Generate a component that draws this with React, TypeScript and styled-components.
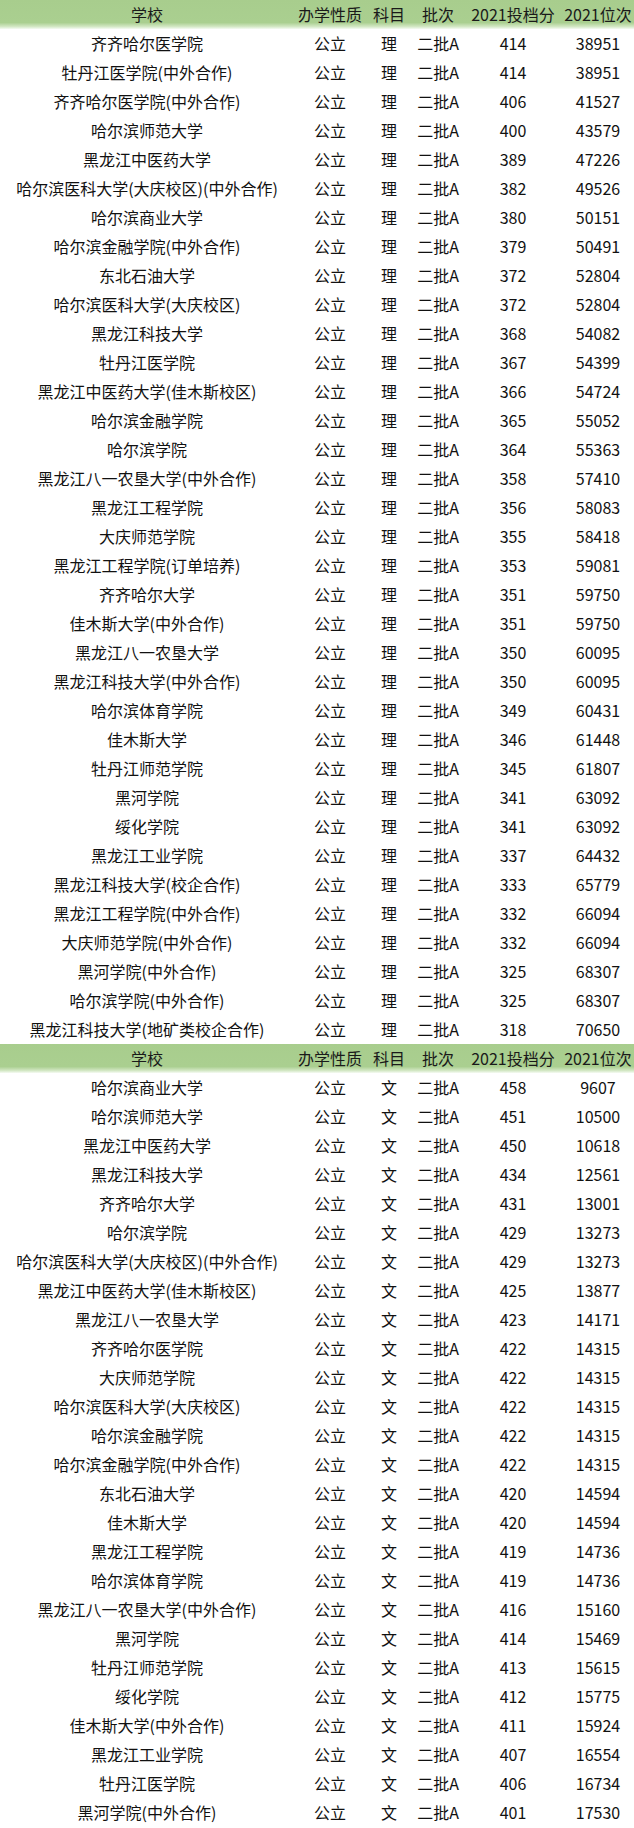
import React from "react";
import styled, { createGlobalStyle } from "styled-components";

const GlobalStyle = createGlobalStyle`
  html, body {
    margin: 0;
    padding: 0;
    background: #ffffff;
  }
  body {
    font-family: "Noto Sans CJK SC", "Noto Sans", sans-serif;
    color: #111111;
  }
`;

type Row = [string, number, number];

const sciRows: Row[] = [
  ["齐齐哈尔医学院", 414, 38951],
  ["牡丹江医学院(中外合作)", 414, 38951],
  ["齐齐哈尔医学院(中外合作)", 406, 41527],
  ["哈尔滨师范大学", 400, 43579],
  ["黑龙江中医药大学", 389, 47226],
  ["哈尔滨医科大学(大庆校区)(中外合作)", 382, 49526],
  ["哈尔滨商业大学", 380, 50151],
  ["哈尔滨金融学院(中外合作)", 379, 50491],
  ["东北石油大学", 372, 52804],
  ["哈尔滨医科大学(大庆校区)", 372, 52804],
  ["黑龙江科技大学", 368, 54082],
  ["牡丹江医学院", 367, 54399],
  ["黑龙江中医药大学(佳木斯校区)", 366, 54724],
  ["哈尔滨金融学院", 365, 55052],
  ["哈尔滨学院", 364, 55363],
  ["黑龙江八一农垦大学(中外合作)", 358, 57410],
  ["黑龙江工程学院", 356, 58083],
  ["大庆师范学院", 355, 58418],
  ["黑龙江工程学院(订单培养)", 353, 59081],
  ["齐齐哈尔大学", 351, 59750],
  ["佳木斯大学(中外合作)", 351, 59750],
  ["黑龙江八一农垦大学", 350, 60095],
  ["黑龙江科技大学(中外合作)", 350, 60095],
  ["哈尔滨体育学院", 349, 60431],
  ["佳木斯大学", 346, 61448],
  ["牡丹江师范学院", 345, 61807],
  ["黑河学院", 341, 63092],
  ["绥化学院", 341, 63092],
  ["黑龙江工业学院", 337, 64432],
  ["黑龙江科技大学(校企合作)", 333, 65779],
  ["黑龙江工程学院(中外合作)", 332, 66094],
  ["大庆师范学院(中外合作)", 332, 66094],
  ["黑河学院(中外合作)", 325, 68307],
  ["哈尔滨学院(中外合作)", 325, 68307],
  ["黑龙江科技大学(地矿类校企合作)", 318, 70650],
];

const artRows: Row[] = [
  ["哈尔滨商业大学", 458, 9607],
  ["哈尔滨师范大学", 451, 10500],
  ["黑龙江中医药大学", 450, 10618],
  ["黑龙江科技大学", 434, 12561],
  ["齐齐哈尔大学", 431, 13001],
  ["哈尔滨学院", 429, 13273],
  ["哈尔滨医科大学(大庆校区)(中外合作)", 429, 13273],
  ["黑龙江中医药大学(佳木斯校区)", 425, 13877],
  ["黑龙江八一农垦大学", 423, 14171],
  ["齐齐哈尔医学院", 422, 14315],
  ["大庆师范学院", 422, 14315],
  ["哈尔滨医科大学(大庆校区)", 422, 14315],
  ["哈尔滨金融学院", 422, 14315],
  ["哈尔滨金融学院(中外合作)", 422, 14315],
  ["东北石油大学", 420, 14594],
  ["佳木斯大学", 420, 14594],
  ["黑龙江工程学院", 419, 14736],
  ["哈尔滨体育学院", 419, 14736],
  ["黑龙江八一农垦大学(中外合作)", 416, 15160],
  ["黑河学院", 414, 15469],
  ["牡丹江师范学院", 413, 15615],
  ["绥化学院", 412, 15775],
  ["佳木斯大学(中外合作)", 411, 15924],
  ["黑龙江工业学院", 407, 16554],
  ["牡丹江医学院", 406, 16734],
  ["黑河学院(中外合作)", 401, 17530],
];

const Page = styled.div`
  width: 634px;
  display: flex;
  flex-direction: column;
`;

const Table = styled.section`
  display: flex;
  flex-direction: column;
`;

const RowLine = styled.div<{ $header?: boolean }>`
  display: grid;
  grid-template-columns: 294px 72px 46px 52px 98px 72px;
  height: 29px;
  align-items: center;
  font-size: 16px;
  line-height: 29px;
  color: ${(p) => (p.$header ? "#1a1a1a" : "#111111")};
  background: ${(p) =>
    p.$header
      ? "linear-gradient(to bottom, #a8cd8d 0%, #aacf90 78%, #d4e8c6 92%, #f6fbf3 100%)"
      : "#ffffff"};
`;

const Cell = styled.div`
  display: flex;
  justify-content: center;
  white-space: nowrap;
  overflow: visible;
`;

const headers = ["学校", "办学性质", "科目", "批次", "2021投档分", "2021位次"];

function DataTable({ rows, subject }: { rows: Row[]; subject: string }) {
  return (
    <Table>
      <RowLine $header>
        {headers.map((h) => (
          <Cell key={h}>{h}</Cell>
        ))}
      </RowLine>
      {rows.map(([name, score, rank], i) => (
        <RowLine key={i}>
          <Cell>{name}</Cell>
          <Cell>公立</Cell>
          <Cell>{subject}</Cell>
          <Cell>二批A</Cell>
          <Cell>{score}</Cell>
          <Cell>{rank}</Cell>
        </RowLine>
      ))}
    </Table>
  );
}

export default function App() {
  return (
    <>
      <GlobalStyle />
      <Page>
        <DataTable rows={sciRows} subject="理" />
        <DataTable rows={artRows} subject="文" />
      </Page>
    </>
  );
}
